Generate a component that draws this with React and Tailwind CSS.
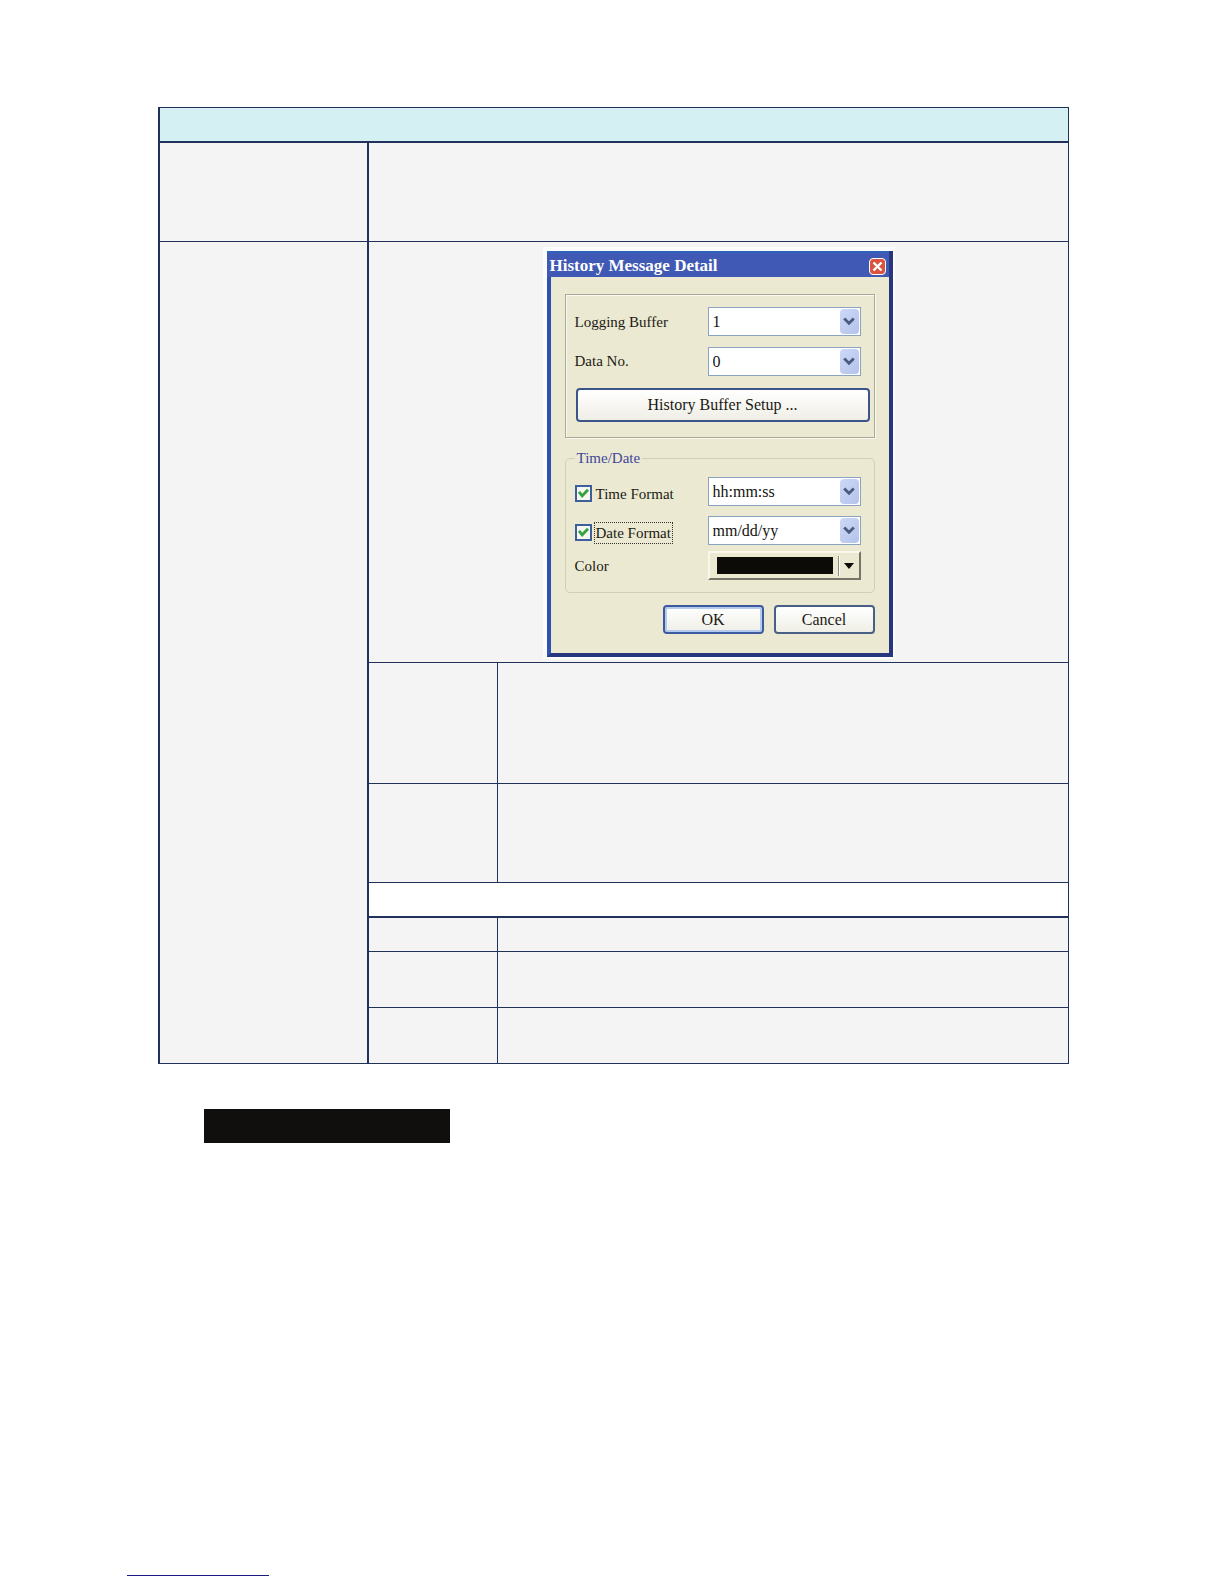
import React from 'react';

const cell = 'border-[#22315c] p-0';
const loggingBuffers = ['1', '2', '3', '4'];
const dataNumbers = ['0', '1', '2', '3'];
const timeFormats = ['hh:mm:ss', 'hh:mm'];
const dateFormats = ['mm/dd/yy', 'dd/mm/yy', 'yy/mm/dd'];

// Row heights under the dialog
const detailRows = ['h-[121px]', 'h-[99px]'];
const formatRows = ['h-[34px]', 'h-[56px]', 'h-[56px]'];

function ComboBox({ id, options, label }) {
    return (
        <div className="relative w-[153px] shrink-0">
            <select
                id={id}
                aria-label={label}
                className="block h-[29px] w-full appearance-none border border-[#8aa3c0] bg-white pl-1 pr-6 text-base leading-5 text-[#15130f] outline-none"
            >
                {options.map((o) => <option key={o}>{o}</option>)}
            </select>
            <span className="pointer-events-none absolute right-[2px] top-[2px] flex h-[25px] w-[19px] items-center justify-center rounded-sm bg-linear-to-br from-[#cdd8f5] to-[#b3c3ec]">
                <svg width="12" height="9" viewBox="0 0 12 9" fill="none">
                    <path d="M1.2 1.5 6 6.2l4.8-4.7" stroke="#4a5a80" strokeWidth="2.8" />
                </svg>
            </span>
        </div>
    );
}

function CheckBox({ id, label, focused }) {
    return (
        <div className="flex items-center pt-1">
            <span className="relative size-[17px]">
                <input
                    id={id}
                    type="checkbox"
                    defaultChecked
                    className="peer block size-[17px] appearance-none border-2 border-[#3d5f9a] bg-[#f6f6f2]"
                />
                <svg className="pointer-events-none absolute left-0 top-0 hidden peer-checked:block" width="17" height="17" viewBox="0 0 17 17" fill="none">
                    <path d="M4 6.8 7.2 10.8l5.8-6" stroke="#35a23f" strokeWidth="2.8" />
                </svg>
            </span>
            <label
                htmlFor={id}
                className={`ml-[2px] border px-px text-[15px] leading-5 whitespace-nowrap ${focused ? 'border-dotted border-[#333]' : 'border-transparent'}`}
            >
                {label}
            </label>
        </div>
    );
}

function HistoryDialog() {
    return (
        <div
            role="dialog"
            aria-label="History Message Detail"
            className="w-[346px] border-x-4 border-b-4 border-l-[#2f52b0] border-r-[#26367f] border-b-[#26367f] bg-[#ebe9d2] font-['Liberation_Serif',serif] text-base text-[#1c1a14]"
        >
            <div className="-ml-1 flex h-[26px] items-center justify-between border-t-2 border-t-[#2f62b8] bg-[#4059b4] pt-[2px] pl-[3px] pr-[3px]">
                <h2 className="text-[17px] leading-5 font-bold text-white">History Message Detail</h2>
                <button type="button" aria-label="Close" className="flex size-[17px] items-center justify-center rounded-sm border border-white bg-[#d9533f]">
                    <svg width="11" height="11" viewBox="0 0 11 11">
                        <path d="M1.5 1.5l8 8M9.5 1.5l-8 8" stroke="#fff" strokeWidth="2.4" />
                    </svg>
                </button>
            </div>

            <div className="px-[14px] pt-[17px] pb-[19px]">
                <div className="border border-[#a9a899] px-[9px] pt-3 pb-[15px] shadow-[inset_1px_1px_0_#fbfaf0,1px_1px_0_#fbfaf0]">
                    <div className="flex items-center justify-between pr-1">
                        <label htmlFor="buffer" className="pt-[2px] text-[15px]">Logging Buffer</label>
                        <ComboBox id="buffer" options={loggingBuffers} />
                    </div>
                    <div className="mt-[11px] flex items-center justify-between pr-1">
                        <label htmlFor="data-no" className="text-[15px]">Data No.</label>
                        <ComboBox id="data-no" options={dataNumbers} />
                    </div>
                    <button type="button" className="mt-3 -mr-[5px] ml-px block h-[34px] w-[294px] rounded-[4px] border-2 border-[#3c5589] bg-linear-to-b from-white to-[#efeee6]">
                        History Buffer Setup ...
                    </button>
                </div>

                <fieldset className="mt-2 rounded-[5px] border border-[#cfcfb8] pr-[13px] pb-3 pl-[9px]">
                    <legend className="px-[2px] text-[15px] leading-6 text-[#3f479a]">Time/Date</legend>
                    <div className="mt-[7px] flex items-center justify-between">
                        <CheckBox id="time" label="Time Format" />
                        <ComboBox id="time-format" label="Time Format" options={timeFormats} />
                    </div>
                    <div className="mt-[10px] flex items-center justify-between">
                        <CheckBox id="date" label="Date Format" focused />
                        <ComboBox id="date-format" label="Date Format" options={dateFormats} />
                    </div>
                    <div className="mt-[6px] flex items-center justify-between">
                        <label htmlFor="color" className="pt-[2px] text-[15px]">Color</label>
                        <button
                            id="color"
                            type="button"
                            className="flex h-[29px] w-[153px] items-center border-2 border-t-[#f8f7ea] border-r-[#77746a] border-b-[#77746a] border-l-[#f8f7ea] pl-[7px]"
                        >
                            <span className="h-[17px] w-[116px] bg-[#0d0b08]" />
                            <span className="ml-[5px] h-5 w-[2px] border-r border-l border-r-white border-l-[#8d8b7d]" />
                            <svg className="ml-1" width="10" height="6" viewBox="0 0 10 6">
                                <path d="M0 0h10L5 6z" fill="#0d0b08" />
                            </svg>
                        </button>
                    </div>
                </fieldset>

                <div className="mt-3 flex justify-end gap-[10px]">
                    <button type="button" className="h-[29px] w-[101px] rounded-[4px] border-2 border-[#3d5a9e] bg-linear-to-b from-white to-[#efeee6] shadow-[inset_0_0_0_2px_#b5cbee]">OK</button>
                    <button type="button" className="h-[29px] w-[101px] rounded-[4px] border-2 border-[#4a5f86] bg-linear-to-b from-white to-[#efeee6]">Cancel</button>
                </div>
            </div>
        </div>
    );
}

export default function App() {
    return (
        <div className="w-full bg-white pt-[107px]">
            <main className="pl-[158px] pr-[155px]">
                <table className="w-full table-fixed border-separate border-spacing-0 bg-[#f4f4f4]">
                    <colgroup>
                        <col className="w-[211px]" />
                        <col className="w-[129px]" />
                        <col />
                    </colgroup>
                    <tbody>
                        <tr className="h-9">
                            <th colSpan={3} className={`${cell} border-t border-r border-b-2 border-l-2 bg-[#d4f0f3]`} />
                        </tr>
                        <tr className="h-[99px]">
                            <td className={`${cell} border-x-2 border-b`} />
                            <td colSpan={2} className={`${cell} border-r border-b`} />
                        </tr>
                        <tr className="h-[421px]">
                            <td rowSpan={7} className={`${cell} border-x-2 border-b`} />
                            <td colSpan={2} className="border-r border-b border-[#22315c] px-0 pt-[2px] pb-0">
                                <div className="mx-auto w-fit border-t-4 border-r-2 border-b-2 border-l-4 border-[#fcfcfc]">
                                    <HistoryDialog />
                                </div>
                            </td>
                        </tr>
                        {detailRows.map((height) => (
                            <tr key={height} className={height}>
                                <td className={`${cell} border-r border-b`} />
                                <td className={`${cell} border-r border-b`} />
                            </tr>
                        ))}
                        <tr className="h-[35px]">
                            <td colSpan={2} className={`${cell} border-r border-b-2 bg-white`} />
                        </tr>
                        {formatRows.map((height, i) => (
                            <tr key={i} className={height}>
                                <td className={`${cell} border-r border-b`} />
                                <td className={`${cell} border-r border-b`} />
                            </tr>
                        ))}
                    </tbody>
                </table>
                <div className="mt-[45px] ml-[46px] h-[34px] w-[246px] bg-[#110f0d]" />
            </main>
            <footer className="mt-[432px] pb-2 pl-[127px]">
                <hr className="w-[142px] border-t border-[#1b1a80]" />
            </footer>
        </div>
    );
}
